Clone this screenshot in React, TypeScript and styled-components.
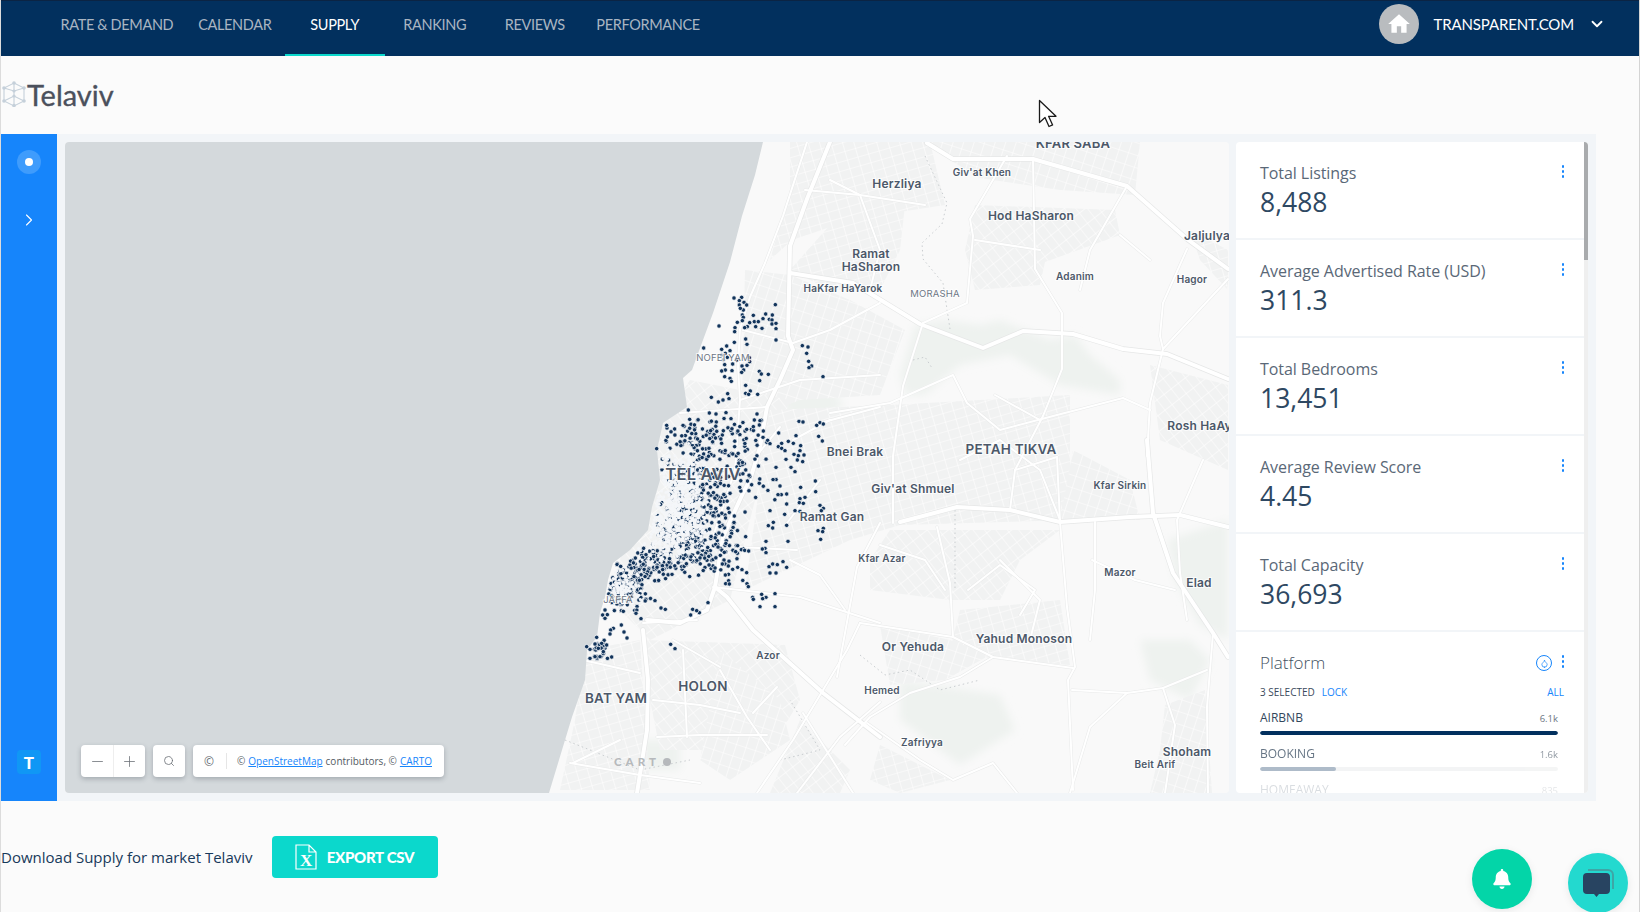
import React from "react";
import styled, { createGlobalStyle } from "styled-components";
import { ChevronDown, ChevronRight, Droplet, Minus, Plus, Search } from "lucide-react";
import { FaBell } from "react-icons/fa";

const GlobalStyle = createGlobalStyle`
  html, body {
    margin: 0;
    padding: 0;
    height: 100%;
    overflow: hidden;
    background: #fbfbfb;
  }
  * {
    box-sizing: border-box;
  }
`;

const Page = styled.div`
  position: relative;
  width: 1640px;
  height: 912px;
  overflow: hidden;
  background: #fbfbfb;
  border-left: 1px solid #dcdcdc;
  border-right: 1px solid #d4d4d4;
  font-family: "Open Sans", "Liberation Sans", sans-serif;
`;

const TopBar = styled.header`
  height: 56px;
  display: flex;
  align-items: stretch;
  justify-content: space-between;
  padding-left: 48px;
  padding-right: 33px;
  background: #02305e;
  border-top: 1px solid #0b2444;
`;

const NavList = styled.nav`
  display: flex;
  align-items: stretch;
`;

const NavItem = styled.a<{ $active?: boolean }>`
  min-width: 100px;
  padding: 0 11.5px 7px;
  display: flex;
  align-items: center;
  justify-content: center;
  font-family: Lato, "Liberation Sans", sans-serif;
  font-size: 14.5px;
  letter-spacing: -0.35px;
  color: ${(p) => (p.$active ? "#ffffff" : "#a9b5c2")};
  border-bottom: 2px solid ${(p) => (p.$active ? "#0bd8cc" : "transparent")};
`;

const Account = styled.div`
  display: flex;
  align-items: center;
  color: #ffffff;
`;

const Avatar = styled.div`
  width: 40px;
  height: 40px;
  margin-right: 15px;
  margin-bottom: 9px;
  border-radius: 50%;
  background: #b9bcbf;
  display: flex;
  align-items: center;
  justify-content: center;
`;

const AccountName = styled.span`
  font-family: Lato, "Liberation Sans", sans-serif;
  font-size: 15px;
  letter-spacing: -0.15px;
  margin-right: 14px;
  margin-bottom: 9px;
`;

const AccountCaret = styled.span`
  display: flex;
  margin-bottom: 9px;
`;

const TitleRow = styled.div`
  height: 78px;
  display: flex;
  align-items: center;
  padding: 0 0 2px 1px;
`;

const Title = styled.h1`
  margin: 0 0 0 1px;
  font-family: Lato, "Liberation Sans", sans-serif;
  font-size: 29px;
  font-weight: 400;
  -webkit-text-stroke: 0.35px #4b505c;
  color: #4b505c;
`;

const Board = styled.section`
  width: 1595px;
  height: 667px;
  display: flex;
  background: #f2f5f8;
`;

const SideRail = styled.aside`
  width: 56px;
  flex-shrink: 0;
  background: #1685fb;
  display: flex;
  flex-direction: column;
  align-items: center;
  padding: 16px 0 27px;
  color: #ffffff;
`;

const RailDot = styled.div`
  width: 24px;
  height: 24px;
  border-radius: 50%;
  background: #3f9cfc;
  display: flex;
  align-items: center;
  justify-content: center;
  margin-bottom: 36px;

  &::after {
    content: "";
    width: 8px;
    height: 8px;
    border-radius: 50%;
    background: #ffffff;
  }
`;

const RailLogo = styled.div`
  margin-top: auto;
  width: 24px;
  height: 24px;
  border-radius: 4px;
  background: #1097f5;
  display: flex;
  align-items: center;
  justify-content: center;
  font-family: Lato, "Liberation Sans", sans-serif;
  font-size: 17px;
  font-weight: 900;
`;

const BoardBody = styled.div`
  flex: 1;
  min-width: 0;
  display: flex;
  gap: 7px;
  padding: 8px;
`;

const MapFrame = styled.div`
  position: relative;
  width: 1164px;
  flex-shrink: 0;
  border-radius: 4px;
  overflow: hidden;
  background: #f9f9f9;
`;

const MapDrawing = styled.svg`
  display: block;
  width: 100%;
  height: 100%;
`;

const PlaceLabel = styled.text<{ $size: number; $muted?: boolean }>`
  font-family: Inter, "Open Sans", sans-serif;
  font-size: ${(p) => p.$size}px;
  font-weight: ${(p) => (p.$muted ? 400 : 600)};
  letter-spacing: 0.2px;
  fill: ${(p) => (p.$muted ? "#6e7785" : "#4c5869")};
  stroke: rgba(255, 255, 255, 0.75);
  stroke-width: 2px;
  paint-order: stroke;
  text-anchor: middle;
  dominant-baseline: central;
`;

const MapControls = styled.div`
  position: absolute;
  left: 16px;
  bottom: 16px;
  display: flex;
  gap: 8px;
`;

const ControlBox = styled.div`
  height: 32px;
  display: flex;
  align-items: center;
  background: #ffffff;
  border-radius: 4px;
  box-shadow: 0 2px 5px rgba(40, 50, 60, 0.28);
  color: #6a6f75;
`;

const ControlButton = styled.span`
  width: 32px;
  height: 32px;
  display: flex;
  align-items: center;
  justify-content: center;
  font-size: 12px;

  & + & {
    border-left: 1px solid #eeeeee;
  }
`;

const Attribution = styled.span`
  height: 16px;
  margin-left: 1px;
  padding: 0 12px 0 10px;
  border-left: 1px solid #e6e6e6;
  display: flex;
  align-items: center;
  gap: 3px;
  font-size: 10px;
  color: #545b63;
  white-space: nowrap;
`;

const AttributionLink = styled.a`
  color: #1685fb;
  text-decoration: underline;
`;

const StatsColumn = styled.div`
  flex: 1;
  min-width: 0;
  display: flex;
  border-radius: 4px;
  overflow: hidden;
  background: #ffffff;
`;

const StatsList = styled.div`
  flex: 1;
  min-width: 0;
  overflow: hidden;
`;

const ScrollTrack = styled.div`
  width: 4px;
  flex-shrink: 0;
  background: #efefef;
`;

const ScrollThumb = styled.div`
  height: 118px;
  background: #a9abad;
`;

const StatCard = styled.article`
  position: relative;
  height: 98px;
  padding: 20px 24px 0;
  border-bottom: 2px solid #f2f5f8;
`;

const StatLabel = styled.div`
  font-size: 16px;
  line-height: 22px;
  letter-spacing: -0.06px;
  color: #5a6877;
`;

const StatValue = styled.div`
  margin-top: 1px;
  font-size: 26.5px;
  line-height: 34px;
  color: #2e4862;
`;

const Kebab = styled.span`
  position: absolute;
  top: 23px;
  right: 20px;
  display: flex;
  flex-direction: column;
  gap: 2.5px;

  & > i {
    display: block;
    width: 2.5px;
    height: 2.5px;
    border-radius: 50%;
    background: #1685fb;
  }
`;

const PlatformCard = styled.article`
  position: relative;
  padding: 20px 26px 0 24px;
`;

const PlatformTitle = styled.div`
  font-size: 17px;
  line-height: 22px;
  font-weight: 300;
  color: #43525f;
`;

const DropBadge = styled.span`
  position: absolute;
  top: 23px;
  right: 32px;
  width: 16px;
  height: 16px;
  border: 1px solid #1685fb;
  border-radius: 50%;
  display: flex;
  align-items: center;
  justify-content: center;
  color: #1685fb;
`;

const SelectionRow = styled.div`
  margin-top: 11px;
  display: flex;
  align-items: center;
  font-size: 10px;
  line-height: 14px;
  color: #3a4a5c;
`;

const SelectionAction = styled.span<{ $end?: boolean }>`
  margin-left: ${(p) => (p.$end ? "auto" : "7px")};
  color: #1685fb;
  ${(p) => (p.$end ? "margin-right: -6px;" : "")}
`;

const BarRow = styled.div<{ $fade: number }>`
  margin-top: 11px;
  opacity: ${(p) => p.$fade};
`;

const BarHead = styled.div`
  display: flex;
  align-items: baseline;
  justify-content: space-between;
  font-size: 12px;
  line-height: 16px;
  color: #33475c;

  & > small {
    font-size: 9.5px;
    color: #6b7682;
  }
`;

const BarTrack = styled.div`
  margin-top: 4px;
  height: 4px;
  border-radius: 2px;
  background: #f0f1f2;
  overflow: hidden;
`;

const BarFill = styled.div<{ $tone: string }>`
  height: 100%;
  border-radius: 2px;
  background: ${(p) => p.$tone};
`;

const ExportRow = styled.div`
  height: 111px;
  display: flex;
  align-items: center;
`;

const ExportText = styled.span`
  font-size: 15px;
  color: #17395a;
  margin-right: 19px;
`;

const ExportButton = styled.button`
  width: 166px;
  height: 42px;
  border: 0;
  border-radius: 4px;
  background: #0bd8cc;
  color: #ffffff;
  display: flex;
  align-items: center;
  justify-content: center;
  gap: 10px;
  font-family: Lato, "Liberation Sans", sans-serif;
  font-size: 15px;
  font-weight: 900;
  letter-spacing: -0.3px;
`;

const Fab = styled.div<{ $tone: string; $right: number; $top: number }>`
  position: absolute;
  top: ${(p) => p.$top}px;
  right: ${(p) => p.$right}px;
  width: 60px;
  height: 60px;
  border-radius: 50%;
  background: ${(p) => p.$tone};
  box-shadow: 0 2px 8px rgba(0, 0, 0, 0.08);
  display: flex;
  align-items: center;
  justify-content: center;
  color: #ffffff;
`;

const Cursor = styled.svg`
  position: absolute;
  left: 1037px;
  top: 99px;
`;

const stats = [
  { label: "Total Listings", value: "8,488" },
  { label: "Average Advertised Rate (USD)", value: "311.3" },
  { label: "Total Bedrooms", value: "13,451" },
  { label: "Average Review Score", value: "4.45" },
  { label: "Total Capacity", value: "36,693" },
];

const platforms = [
  { name: "AIRBNB", count: "6.1k", width: 100, tone: "#02305e", fade: 1 },
  { name: "BOOKING", count: "1.6k", width: 25.5, tone: "#93a5b7", fade: 0.75 },
  { name: "HOMEAWAY", count: "835", width: 13, tone: "#c3ced8", fade: 0.18 },
];

const navItems = ["RATE & DEMAND", "CALENDAR", "SUPPLY", "RANKING", "REVIEWS", "PERFORMANCE"];

const seaPoints =
  "65,142 763,142 755,175 742,216 730,262 724,280 713,313 703,340 692,370 683,378 687,407 663,423 657,450 660,480 652,507 648,530 630,550 613,563 608,580 605,597 600,613 597,637 587,650 585,680 572,717 549,793 65,793";

// residential patches, street texture comes from the pattern fill
const blocks = [
  "790,142 930,142 945,205 880,215 845,222 792,240 770,260 790,190",
  "930,142 1140,142 1135,195 1060,190 980,178 950,160",
  "975,205 1115,210 1120,235 1045,262 1040,285 975,290 965,250",
  "830,225 905,205 900,250 880,290 830,290 790,270",
  "745,270 790,275 850,300 905,330 880,395 800,400 775,410 742,400",
  "690,380 790,400 760,480 730,600 650,640 610,600 650,440",
  "770,410 890,405 1070,395 1070,520 900,525 850,540 745,590",
  "1073,450 1130,480 1140,520 1060,520",
  "890,530 1060,530 1020,560 1000,600 950,600 870,590 870,560",
  "960,610 1060,600 1070,665 1000,660 950,650",
  "880,625 950,640 990,655 945,680 890,685",
  "645,640 785,645 800,700 770,750 660,750 650,700",
  "585,650 640,640 650,790 560,790 575,720",
  "720,650 780,700 790,740 730,780 700,760",
  "1150,365 1228,385 1228,470 1160,440",
  "1190,230 1228,250 1228,290 1200,260",
  "1165,705 1205,690 1212,793 1150,793 1160,750",
  "800,720 850,770 840,793 770,793",
  "880,745 950,780 900,793 870,780",
];

const parks = [
  "915,325 945,320 980,325 1000,320 1050,340 1075,335 1090,355 1120,380 1120,395 1060,385 1010,355 960,365 925,395 905,395 900,375",
  "780,395 825,385 845,405 820,420 790,420",
  "1168,540 1228,520 1228,640 1200,625 1175,580",
  "900,680 1000,695 1015,730 960,765 900,720",
  "640,740 680,740 680,770 640,770",
  "1140,640 1190,640 1210,660 1190,700 1150,680",
];

const majorRoads = [
  "830,142 807,199 790,246 788,336 793,350 780,380 767,407 760,447 750,480 743,493 723,537 715,587 727,597 753,630 823,693 880,737",
  "715,587 707,610 680,623 647,620",
  "643,630 648,680 647,730 637,793",
  "900,522 957,507 1010,510 1060,522 1130,517 1180,515 1228,527",
  "790,273 853,283 920,324 983,348 1023,331 1073,334 1123,349 1167,354 1228,379",
  "927,143 953,159 1033,159 1127,186 1187,239 1228,269",
  "1147,440 1153,513 1173,573 1213,633 1228,657",
];

const minorRoads = [
  "807,142 783,216 765,263 750,297 740,329 738,367 740,400 735,470 712,540",
  "1033,159 1035,269 1062,313 1062,369 1043,416 1015,470",
  "1007,156 970,219 973,236 967,303 923,323",
  "922,326 903,386 893,456 893,523",
  "1187,249 1163,303 1160,336 1163,349",
  "1228,279 1163,349 1150,403 1147,456",
  "830,413 890,403 953,375 967,403 1000,430 1057,415 1123,398 1150,410",
  "1057,457 1060,522 1067,607 1075,667 1068,680 1073,790",
  "1203,460 1177,520 1180,573 1187,620",
  "1213,633 1207,707 1208,793",
  "860,623 953,637 993,657 1073,668",
  "993,657 960,677 910,693 870,717 845,745",
  "1072,690 1127,693 1163,688 1207,670",
  "1127,693 1090,727 1070,793",
  "867,723 920,760 953,780 993,763 1017,793",
  "937,527 950,583 953,637",
  "805,190 860,195 925,205",
  "740,400 800,380 880,375",
  "960,460 1000,440 1040,470 1060,520",
  "1000,560 1020,580 1040,600 1030,640",
  "968,590 1000,565 1035,590 1020,615",
  "1095,522 1095,590 1090,640",
  "1092,560 1135,580 1175,590",
  "1163,688 1175,725 1165,793",
  "653,700 700,705 740,713",
  "657,737 700,735 767,735",
  "720,670 747,717 770,750",
  "683,650 687,737",
  "673,640 720,667",
  "583,660 640,673",
  "573,763 620,740",
  "570,763 640,775 700,783",
  "757,793 793,740 847,650 860,623",
  "753,713 777,687",
  "803,713 853,793",
  "880,702 840,737 797,793",
  "737,547 797,550",
  "713,587 800,597 880,623",
  "820,480 787,523",
  "643,623 697,620",
  "880,523 857,567 837,677",
  "793,343 830,330 880,303",
  "743,330 793,343",
  "767,407 680,413",
  "820,423 880,407",
  "780,427 753,460",
  "793,440 830,420",
  "790,560 820,575 845,610",
  "880,545 925,560 945,590",
  "1010,510 1015,470 1057,457",
  "830,180 860,195 880,250 870,290",
  "975,240 1040,250",
  "1127,186 1090,250 1080,290",
  "995,395 1040,420",
  "1120,235 1150,260",
];

const dashedLines = [
  "925,156 947,203 942,224 922,243 923,259 943,283 950,329",
  "913,360 925,357 932,368",
  "955,510 955,590",
  "860,655 885,675 910,670 940,690 980,680",
  "565,740 640,770 690,760",
  "780,760 820,750 790,700",
];

const places: [string, number, number, number, boolean?][] = [
  ["KFAR SABA", 1073, 143, 13],
  ["Herzliya", 897, 183, 12],
  ["Giv'at Khen", 982, 172, 10],
  ["Hod HaSharon", 1031, 215, 12],
  ["Ramat", 871, 253, 12],
  ["HaSharon", 871, 266, 12],
  ["HaKfar HaYarok", 843, 288, 10],
  ["MORASHA", 935, 293, 9.5, true],
  ["Adanim", 1075, 276, 10],
  ["Hagor", 1192, 279, 10],
  ["Jaljulya", 1207, 235, 12],
  ["Rosh HaAyin", 1205, 425, 12],
  ["PETAH TIKVA", 1011, 449, 13.5],
  ["Bnei Brak", 855, 451, 12],
  ["Ramat Gan", 832, 516, 12],
  ["Kfar Azar", 882, 558, 10],
  ["Giv'at Shmuel", 913, 488, 12],
  ["Kfar Sirkin", 1120, 485, 10],
  ["Mazor", 1120, 572, 10],
  ["Elad", 1199, 582, 12],
  ["Yahud Monoson", 1024, 638, 12],
  ["Or Yehuda", 913, 646, 12],
  ["Hemed", 882, 690, 10],
  ["Zafriyya", 922, 742, 10],
  ["Shoham", 1187, 751, 12],
  ["Beit Arif", 1155, 764, 10],
  ["Azor", 768, 655, 10],
  ["HOLON", 703, 686, 13.5],
  ["BAT YAM", 616, 698, 13.5],
  ["TEL AVIV", 703, 474, 16.5],
  ["NOFEI YAM", 723, 357, 9.5, true],
  ["JAFFA", 618, 599, 9.5, true],
];

// sparse dots read off the picture, in crop units (see toReal)
const northDots = [
  462,54, 485,52, 478,62, 492,67, 500,75, 478,75, 490,90, 481,85, 487,105, 490,112, 472,127, 487,122, 586,74, 520,106,
  557,102, 577,105, 549,116, 568,118, 576,120, 523,125, 509,128, 535,125, 502,140, 527,140, 546,145, 494,143, 576,132,
  588,130, 588,146, 417,138, 465,143, 464,155, 497,177, 588,180, 463,187, 501,193, 440,198, 425,208, 371,204, 450,212,
  436,220, 425,225, 508,233, 442,232, 430,240, 470,240, 509,245, 434,254, 458,252, 501,256, 486,258, 436,270, 456,272,
  425,273, 491,270, 485,277, 538,274, 565,283, 544,282, 434,290, 450,295, 454,304, 539,302, 497,316, 443,341, 511,333,
  497,340, 506,343, 533,343, 394,352, 447,356, 429,360, 415,366, 667,197, 684,201, 680,220, 686,244, 695,258, 687,263,
  729,290, 325,390, 408,402, 388,399, 438,398, 531,402, 453,416, 523,420, 540,422, 520,440, 538,435, 500,448, 657,424,
  669,426, 710,436, 720,428, 730,432, 716,469, 727,483, 648,467, 596,459, 550,453, 549,472, 563,481, 570,491, 605,490,
  625,484, 640,490, 662,497, 595,500, 605,505, 615,512, 660,512, 655,527, 672,525, 642,523, 618,538, 668,545, 652,540,
  588,562, 633,562, 645,575, 230,506, 260,436,
];

const southDots = [
  570,92, 614,103, 620,72, 662,22, 706,3, 707,35, 600,18, 604,44, 620,42, 594,44, 660,56, 675,52, 658,68, 670,70, 720,76,
  730,85, 724,92, 645,92, 660,94, 580,127, 565,137, 578,144, 620,136, 624,184, 714,152, 730,145, 728,155, 722,178, 558,184,
  555,205, 547,207, 558,218, 473,197, 484,209, 494,211, 506,213, 467,215, 433,217, 421,226, 432,240, 427,252, 567,260,
  578,252, 592,254, 609,245, 620,262, 570,279, 588,279, 445,258, 473,262, 458,268, 486,269, 500,278, 436,285, 437,311,
  448,312, 501,311, 505,320, 585,341, 545,343, 558,352, 548,356, 518,352, 520,358, 540,380, 585,380, 384,368, 225,362,
  243,384, 256,388, 338,388, 332,405, 358,398, 350,392, 168,400, 183,416, 124,392, 130,394, 75,390, 82,404, 68,405, 75,415,
  124,435, 132,456, 141,474, 100,445, 92,450, 90,462, 50,472, 272,493, 285,506, 95,531, 30,508, 45,492, 65,490, 80,495,
  30,535, 55,505, 60,530, 45,530, 70,515, 20,500,
];

const toReal = (list: number[], originY: number) => {
  const out: [number, number][] = [];
  for (let i = 0; i < list.length; i += 2) {
    out.push([580 + list[i] / 3, originY + list[i + 1] / 3]);
  }
  return out;
};

// the packed blocks of central Tel Aviv and Jaffa are scattered, not traced
const coast: [number, number][] = [
  [407, 687], [423, 663], [450, 657], [480, 660], [507, 652], [530, 648], [550, 630], [563, 613], [580, 608], [597, 605], [613, 600], [640, 597],
];

const coastAt = (y: number) => {
  for (let i = 1; i < coast.length; i++) {
    if (y <= coast[i][0]) {
      const [y0, x0] = coast[i - 1];
      const [y1, x1] = coast[i];
      return x0 + ((y - y0) / (y1 - y0)) * (x1 - x0);
    }
  }
  return 588;
};

const makeRand = (start: number) => {
  let seed = start;
  return () => {
    seed = (seed * 16807) % 2147483647;
    return seed / 2147483647;
  };
};

const scatter = (start: number, clusters: number[][]) => {
  const rand = makeRand(start);
  const out: [number, number][] = [];
  clusters.forEach(([cx, cy, sx, sy, n]) => {
    for (let i = 0; i < n; i++) {
      const x = cx + (rand() + rand() - 1) * sx;
      const y = cy + (rand() + rand() - 1) * sy;
      if (y > 412 && y < 665 && x > coastAt(y) + 3) out.push([x, y]);
    }
  });
  return out;
};

const listingDots = [
  ...scatter(20480, [
    [710, 438, 55, 24, 110],
    [745, 470, 40, 45, 45],
    [695, 495, 45, 50, 170],
    [695, 535, 55, 34, 160],
    [705, 562, 40, 22, 50],
    [626, 585, 26, 28, 150],
    [652, 565, 30, 20, 70],
    [598, 650, 12, 10, 24],
  ]),
  ...toReal(northDots, 280),
  ...toReal(southDots, 480),
];

// the packed core reads as pale specks in the picture
const paleSpecks = scatter(977, [
  [680, 490, 28, 50, 330],
  [672, 530, 40, 36, 340],
  [622, 588, 20, 22, 110],
]);

const streetPatterns = ["streetsA", "streetsB", "streetsC"];

const CityMap: React.FC = () => (
  <MapDrawing viewBox="65 142 1164 651" role="img" aria-label="Map of Tel Aviv listings">
    <defs>
      <pattern id="streetsA" width="11" height="9" patternUnits="userSpaceOnUse" patternTransform="rotate(-16)">
        <rect width="11" height="9" fill="#f1f2f2" />
        <path d="M0 0H11M0 0V9" stroke="#ffffff" strokeWidth="1.2" />
      </pattern>
      <pattern id="streetsB" width="10" height="12" patternUnits="userSpaceOnUse" patternTransform="rotate(18)">
        <rect width="10" height="12" fill="#f1f2f2" />
        <path d="M0 0H10M0 0V12" stroke="#ffffff" strokeWidth="1.2" />
      </pattern>
      <pattern id="streetsC" width="13" height="9" patternUnits="userSpaceOnUse" patternTransform="rotate(52)">
        <rect width="13" height="9" fill="#f1f2f2" />
        <path d="M0 0H13M0 0V9" stroke="#ffffff" strokeWidth="1.2" />
      </pattern>
      <filter id="soft" x="-10%" y="-10%" width="120%" height="120%">
        <feGaussianBlur stdDeviation="0.7" />
      </filter>
      <filter id="softer" x="-10%" y="-10%" width="120%" height="120%">
        <feGaussianBlur stdDeviation="4" />
      </filter>
    </defs>
    <rect x="65" y="142" width="1164" height="651" fill="#f9f9f9" />
    <g filter="url(#softer)">
      {parks.map((p) => (
        <polygon key={p} points={p} fill="#eef2ef" />
      ))}
    </g>
    <g filter="url(#soft)">
      {blocks.map((p, i) => (
        <polygon key={p} points={p} fill={`url(#${streetPatterns[i % 3]})`} />
      ))}
    </g>
    {dashedLines.map((p) => (
      <polyline key={p} points={p} fill="none" stroke="#c9cdd0" strokeWidth="1" strokeDasharray="1.5 3" />
    ))}
    <g fill="none" strokeLinejoin="round" strokeLinecap="round">
      {minorRoads.map((p) => (
        <polyline key={p} points={p} stroke="#e9eaea" strokeWidth="3" />
      ))}
      {majorRoads.map((p) => (
        <polyline key={p} points={p} stroke="#e6e7e7" strokeWidth="5.4" />
      ))}
      {minorRoads.map((p) => (
        <polyline key={p} points={p} stroke="#ffffff" strokeWidth="2" />
      ))}
      {majorRoads.map((p) => (
        <polyline key={p} points={p} stroke="#ffffff" strokeWidth="4" />
      ))}
    </g>
    <polygon points={seaPoints} fill="#d4d9dc" />
    {listingDots.map(([x, y], i) => (
      <circle key={i} cx={x} cy={y} r="2.2" fill="#12345b" stroke="#ffffff" strokeWidth="0.7" />
    ))}
    {paleSpecks.map(([x, y], i) => (
      <circle key={i} cx={x} cy={y} r="1.5" fill="#f4f6f9" />
    ))}
    {places.map(([name, x, y, size, muted]) => (
      <PlaceLabel key={name} x={x} y={y} $size={size} $muted={muted}>
        {name}
      </PlaceLabel>
    ))}
    <g fill="#b6b9bc">
      <text x="614" y="766" fontFamily="Lato, sans-serif" fontSize="11.5" fontWeight="900" letterSpacing="4">
        CART
      </text>
      <circle cx="667" cy="762" r="4" />
    </g>
  </MapDrawing>
);

const HomeGlyph = () => (
  <svg width="26" height="26" viewBox="0 0 24 24" fill="#ffffff">
    <path d="M10 20v-6h4v6h5v-8h3L12 3 2 12h3v8z" />
  </svg>
);

const NetworkGlyph = () => (
  <svg width="24" height="26" viewBox="0 0 24 26" fill="none" stroke="#c5d0da" strokeWidth="1.1">
    <path d="M12 2 22 7v13l-10 5-10-5V7zM2 7l10 3 10-3M12 2v23M2 20l10-5 10 5" />
    <g fill="#c5d0da" stroke="none">
      <circle cx="12" cy="2" r="1.8" />
      <circle cx="22" cy="7" r="1.8" />
      <circle cx="2" cy="7" r="1.8" />
      <circle cx="22" cy="20" r="1.8" />
      <circle cx="2" cy="20" r="1.8" />
      <circle cx="12" cy="24.5" r="1.8" />
      <circle cx="12" cy="10" r="1.6" />
      <circle cx="12" cy="15" r="1.6" />
    </g>
  </svg>
);

const SheetGlyph = () => (
  <svg width="22" height="26" viewBox="0 0 22 26" fill="none" stroke="#ffffff" strokeWidth="1.2">
    <path d="M1 1h13l7 7v17H1zM14 1v7h7" />
    <text x="11" y="21.5" textAnchor="middle" fill="#ffffff" stroke="none" fontFamily="Liberation Serif, serif" fontSize="17" fontWeight="700">
      X
    </text>
  </svg>
);

const ChatGlyph = () => (
  <svg width="32" height="30" viewBox="0 0 32 30">
    <path d="M6 2h20a5 5 0 0 1 5 5v14" fill="none" stroke="#3ea6a6" strokeWidth="2" />
    <path d="M5 5h19a4 4 0 0 1 4 4v13a4 4 0 0 1-4 4h-7l-2.5 3-2.5-3H5a4 4 0 0 1-4-4V9a4 4 0 0 1 4-4z" fill="#284461" />
  </svg>
);

const KebabDots = () => (
  <Kebab>
    <i />
    <i />
    <i />
  </Kebab>
);

const App: React.FC = () => (
  <>
    <GlobalStyle />
    <Page>
      <TopBar>
        <NavList>
          {navItems.map((item) => (
            <NavItem key={item} $active={item === "SUPPLY"}>
              {item}
            </NavItem>
          ))}
        </NavList>
        <Account>
          <Avatar>
            <HomeGlyph />
          </Avatar>
          <AccountName>TRANSPARENT.COM</AccountName>
          <AccountCaret>
            <ChevronDown size={18} strokeWidth={2.4} />
          </AccountCaret>
        </Account>
      </TopBar>
      <TitleRow>
        <NetworkGlyph />
        <Title>Telaviv</Title>
      </TitleRow>
      <Board>
        <SideRail>
          <RailDot />
          <ChevronRight size={20} strokeWidth={1.3} />
          <RailLogo>T</RailLogo>
        </SideRail>
        <BoardBody>
          <MapFrame>
            <CityMap />
            <MapControls>
              <ControlBox>
                <ControlButton>
                  <Minus size={17} strokeWidth={1.1} />
                </ControlButton>
                <ControlButton>
                  <Plus size={17} strokeWidth={1.1} />
                </ControlButton>
              </ControlBox>
              <ControlBox>
                <ControlButton>
                  <Search size={12} strokeWidth={1.6} />
                </ControlButton>
              </ControlBox>
              <ControlBox>
                <ControlButton>©</ControlButton>
                <Attribution>
                  © <AttributionLink>OpenStreetMap</AttributionLink> contributors, © <AttributionLink>CARTO</AttributionLink>
                </Attribution>
              </ControlBox>
            </MapControls>
          </MapFrame>
          <StatsColumn>
            <StatsList>
              {stats.map((s) => (
                <StatCard key={s.label}>
                  <StatLabel>{s.label}</StatLabel>
                  <StatValue>{s.value}</StatValue>
                  <KebabDots />
                </StatCard>
              ))}
              <PlatformCard>
                <PlatformTitle>Platform</PlatformTitle>
                <DropBadge>
                  <Droplet size={9} strokeWidth={2} />
                </DropBadge>
                <KebabDots />
                <SelectionRow>
                  3 SELECTED
                  <SelectionAction>LOCK</SelectionAction>
                  <SelectionAction $end>ALL</SelectionAction>
                </SelectionRow>
                {platforms.map((p) => (
                  <BarRow key={p.name} $fade={p.fade}>
                    <BarHead>
                      {p.name}
                      <small>{p.count}</small>
                    </BarHead>
                    <BarTrack>
                      <BarFill $tone={p.tone} style={{ width: `${p.width}%` }} />
                    </BarTrack>
                  </BarRow>
                ))}
              </PlatformCard>
            </StatsList>
            <ScrollTrack>
              <ScrollThumb />
            </ScrollTrack>
          </StatsColumn>
        </BoardBody>
      </Board>
      <ExportRow>
        <ExportText>Download Supply for market Telaviv</ExportText>
        <ExportButton>
          <SheetGlyph />
          EXPORT CSV
        </ExportButton>
      </ExportRow>
      <Fab $tone="#03d5a8" $right={107} $top={849}>
        <FaBell size={20} />
      </Fab>
      <Fab $tone="#23d9cf" $right={11} $top={853}>
        <ChatGlyph />
      </Fab>
      <Cursor width="20" height="30" viewBox="0 0 20 30">
        <path d="M1.5 1.5v22l5.5-5 4 9 3.6-1.6-4-8.6h7.4z" fill="#ffffff" stroke="#1a1a1a" strokeWidth="1.3" strokeLinejoin="round" />
      </Cursor>
    </Page>
  </>
);

export default App;
